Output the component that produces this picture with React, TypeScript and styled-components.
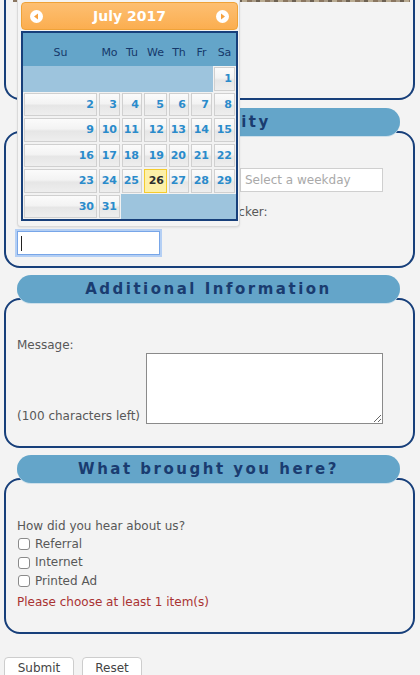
import React from 'react';
import styled, { createGlobalStyle } from 'styled-components';

const GlobalStyle = createGlobalStyle`
    html, body {
        margin: 0;
        padding: 0;
        background: #f3f3f3;
    }
    body {
        font-family: "DejaVu Sans", Verdana, sans-serif;
        font-size: 12px;
        line-height: 15px;
        color: #585858;
    }
`;

const Page = styled.div`
    position: relative;
    width: 420px;
    padding: 0 5px 0 4px;
    box-sizing: border-box;
`;

const Section = styled.section<{ $gap?: number }>`
    margin-top: ${p => p.$gap ?? 7}px;
`;

const Legend = styled.div`
    position: relative;
    z-index: 1;
    height: 28px;
    margin: 0 15px 0 13px;
    border-radius: 14px;
    background: #64a5c9;
    box-shadow: 0 1px 0 #cddfea;
    color: #1a3c70;
    font: bold 15px/28px "DejaVu Sans", Verdana, sans-serif;
    letter-spacing: 2.5px;
    text-align: center;
`;

const Box = styled.div<{ $pad: string }>`
    margin-top: -5px;
    border: 2px solid #173f7a;
    border-radius: 16px;
    padding: ${p => p.$pad};
`;

const TopBox = styled.div`
    height: 100px;
    box-sizing: border-box;
    border: 2px solid #173f7a;
    border-top: none;
    border-radius: 0 0 16px 16px;
`;

const Photo = styled.div`
    height: 2px;
    margin: 0 3px 0 7px;
    background: repeating-linear-gradient(90deg, #8a7660 0 5px, #a99b86 5px 9px, #6d6152 9px 13px, #b9ab92 13px 18px);
`;

const Line = styled.div<{ $mt?: number }>`
    margin-top: ${p => p.$mt ?? 0}px;
`;

const FieldRow = styled.div`
    display: flex;
    align-items: center;
`;

const FieldLabel = styled.label`
    width: 223px;
`;

const TextInput = styled.input`
    width: 143px;
    height: 24px;
    box-sizing: border-box;
    border: 1px solid #cfcfcf;
    padding: 0 4px;
    font: 12px "DejaVu Sans", Verdana, sans-serif;
    color: #555;
    background: #fff;
    &::placeholder {
        color: #a9a9a9;
    }
`;

const FocusedInput = styled.div`
    width: 143px;
    height: 24px;
    box-sizing: border-box;
    border: 1px solid #78a6e8;
    box-shadow: 0 0 0 2px #b4cff4;
    background: #fff;
    display: flex;
    align-items: center;
    padding-left: 3px;
`;

const Caret = styled.span`
    width: 1px;
    height: 15px;
    background: #222;
`;

const MessageRow = styled.div`
    display: flex;
    align-items: flex-end;
    gap: 6px;
`;

const TextArea = styled.textarea`
    display: block;
    width: 237px;
    height: 71px;
    box-sizing: border-box;
    border: 1px solid #8a8a8a;
    background: #fff;
    margin: 0;
    font: 12px "DejaVu Sans", Verdana, sans-serif;
`;

const CheckList = styled.div`
    margin-top: 1px;
`;

const CheckRow = styled.label`
    display: flex;
    align-items: center;
    height: 18.5px;
    gap: 5px;
`;

const CheckBox = styled.input`
    appearance: none;
    width: 12px;
    height: 12px;
    margin: 0 0 0 1px;
    border: 1px solid #8a8a8a;
    border-radius: 3px;
    background: #fff;
`;

const ErrorText = styled.div`
    margin-top: 4px;
    color: #a93232;
`;

const Buttons = styled.div`
    display: flex;
    gap: 8px;
    margin-top: 23px;
`;

const Button = styled.button<{ $w: number }>`
    width: ${p => p.$w}px;
    height: 22px;
    border: 1px solid #cdcdcd;
    border-radius: 4px;
    background: #fff;
    color: #444;
    font: 12px "DejaVu Sans", Verdana, sans-serif;
    padding: 0;
`;

/* date picker popup */

const Popup = styled.div`
    position: absolute;
    z-index: 5;
    left: 17px;
    top: 0;
    width: 223px;
    box-sizing: border-box;
    padding: 2px 1px 5px 3px;
    background: #f4f4f4;
    border: 1px solid #dadada;
    border-top: none;
    border-radius: 0 0 4px 4px;
    box-shadow: 0 1px 2px rgba(0, 0, 0, 0.08);
`;

const PickerHeader = styled.div`
    height: 28px;
    box-sizing: border-box;
    border: 1px solid #efa238;
    border-radius: 4px;
    background: linear-gradient(#fdbf72, #fbae50);
    display: flex;
    align-items: center;
    justify-content: space-between;
    padding: 0 8px;
    color: #fff;
    font: bold 14px "DejaVu Sans", Verdana, sans-serif;
`;

const Calendar = styled.div`
    margin-top: 1px;
    width: 217px;
    box-sizing: border-box;
    border: 2px solid #173f7a;
    display: grid;
    grid-template-columns: 75px 23px 22px 25px 22px 23px 23px;
    grid-template-rows: 33px repeat(6, 25.5px);
    background: #f2f2f2;
`;

const WeekDay = styled.div`
    background: #64a5c9;
    color: #15386a;
    font-size: 11px;
    text-align: center;
    padding-top: 12px;
`;

const Blank = styled.div<{ $span: number }>`
    grid-column: span ${p => p.$span};
    background: #9dc4dd;
`;

const DayCell = styled.div`
    padding: 1px;
    box-sizing: border-box;
`;

const DayLink = styled.a<{ $today?: boolean }>`
    display: block;
    height: 100%;
    box-sizing: border-box;
    border: 1px solid ${p => (p.$today ? '#f5cc2e' : '#d0d0d0')};
    background: ${p =>
        p.$today
            ? '#fdf0a8'
            : 'linear-gradient(#fbfbfb 0%, #f3f3f3 45%, #e6e6e6 55%, #eeeeee 100%)'};
    color: ${p => (p.$today ? '#2e2e2e' : '#2a8bcb')};
    font: bold 11px/22px "DejaVu Sans", Verdana, sans-serif;
    text-align: right;
    padding-right: 2px;
    text-decoration: none;
`;

const NavIcon = ({ dir }: { dir: 'prev' | 'next' }) => (
    <svg width="13" height="13" viewBox="0 0 13 13">
        <circle cx="6.5" cy="6.5" r="6.5" fill="#fff" />
        {dir === 'prev' ? (
            <path d="M4 6.5 L8 3.5 L8 9.5 Z" fill="#f7a23f" />
        ) : (
            <path d="M9 6.5 L5 3.5 L5 9.5 Z" fill="#f7a23f" />
        )}
    </svg>
);

const weekDays = ['Su', 'Mo', 'Tu', 'We', 'Th', 'Fr', 'Sa'];

const DatePicker = () => {
    const days = Array.from({ length: 31 }, (_, i) => i + 1);
    return (
        <Popup>
            <PickerHeader>
                <NavIcon dir="prev" />
                <span>July 2017</span>
                <NavIcon dir="next" />
            </PickerHeader>
            <Calendar>
                {weekDays.map(d => (
                    <WeekDay key={d}>{d}</WeekDay>
                ))}
                <Blank $span={6} />
                {days.map(d => (
                    <DayCell key={d}>
                        <DayLink href="#" $today={d === 26}>{d}</DayLink>
                    </DayCell>
                ))}
                <Blank $span={5} />
            </Calendar>
        </Popup>
    );
};

const App = () => {
    return (
        <React.Fragment>
            <GlobalStyle />
            <Page>
                <DatePicker />
                <TopBox>
                    <Photo />
                </TopBox>

                <Section $gap={8}>
                    <Legend>Availability</Legend>
                    <Box $pad="35px 11px 11px">
                        <FieldRow>
                            <FieldLabel>Preferred weekday:</FieldLabel>
                            <TextInput placeholder="Select a weekday" />
                        </FieldRow>
                        <Line $mt={13}>Please select a date from the date picker:</Line>
                        <Line $mt={11}>
                            <FocusedInput>
                                <Caret />
                            </FocusedInput>
                        </Line>
                    </Box>
                </Section>

                <Section>
                    <Legend>Additional Information</Legend>
                    <Box $pad="38px 11px 22px">
                        <Line>Message:</Line>
                        <MessageRow>
                            <span>(100 characters left)</span>
                            <TextArea />
                        </MessageRow>
                    </Box>
                </Section>

                <Section>
                    <Legend>What brought you here?</Legend>
                    <Box $pad="39px 11px 22px">
                        <Line>How did you hear about us?</Line>
                        <CheckList>
                            <CheckRow><CheckBox type="checkbox" />Referral</CheckRow>
                            <CheckRow><CheckBox type="checkbox" />Internet</CheckRow>
                            <CheckRow><CheckBox type="checkbox" />Printed Ad</CheckRow>
                        </CheckList>
                        <ErrorText>Please choose at least 1 item(s)</ErrorText>
                    </Box>
                </Section>

                <Buttons>
                    <Button $w={70}>Submit</Button>
                    <Button $w={60}>Reset</Button>
                </Buttons>
            </Page>
        </React.Fragment>
    );
};

export default App;
